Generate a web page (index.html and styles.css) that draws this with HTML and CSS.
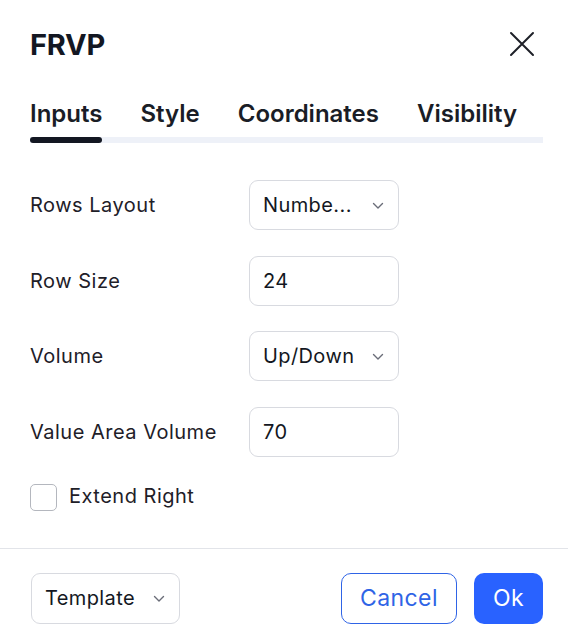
FILE: index.html
```html
<!DOCTYPE html>
<html>
<head>
<meta charset="utf-8">
<link rel="stylesheet" href="styles.css">
</head>
<body>
<div class="dialog">
  <div class="header">
    <div class="title">FRVP</div>
    <svg class="close" width="26" height="26" viewBox="0 0 26 26"><path d="M2 2 L24 24 M24 2 L2 24" stroke="#1e2028" stroke-width="2" stroke-linecap="round" fill="none"/></svg>
  </div>
  <div class="tabs">
    <div class="tab active">Inputs</div>
    <div class="tab">Style</div>
    <div class="tab">Coordinates</div>
    <div class="tab">Visibility</div>
  </div>
  <div class="form">
    <div class="label">Rows Layout</div>
    <div class="field select"><span>Numbe...</span><svg class="chev" width="12" height="8" viewBox="0 0 12 8"><path d="M1.5 1.5 L6 6 L10.5 1.5" stroke="#6a6d78" stroke-width="1.4" fill="none" stroke-linecap="round" stroke-linejoin="round"/></svg></div>
    <div class="label">Row Size</div>
    <div class="field"><span>24</span></div>
    <div class="label">Volume</div>
    <div class="field select"><span>Up/Down</span><svg class="chev" width="12" height="8" viewBox="0 0 12 8"><path d="M1.5 1.5 L6 6 L10.5 1.5" stroke="#6a6d78" stroke-width="1.4" fill="none" stroke-linecap="round" stroke-linejoin="round"/></svg></div>
    <div class="label">Value Area Volume</div>
    <div class="field"><span>70</span></div>
  </div>
  <div class="check-row">
    <div class="checkbox"></div>
    <div class="check-label">Extend Right</div>
  </div>
</div>
<div class="footer">
  <div class="field select template"><span>Template</span><svg class="chev" width="12" height="8" viewBox="0 0 12 8"><path d="M1.5 1.5 L6 6 L10.5 1.5" stroke="#6a6d78" stroke-width="1.4" fill="none" stroke-linecap="round" stroke-linejoin="round"/></svg></div>
  <div class="buttons">
    <div class="btn cancel">Cancel</div>
    <div class="btn ok">Ok</div>
  </div>
</div>
</body>
</html>
```
FILE: styles.css
```css
* { box-sizing: border-box; }
html, body { margin: 0; padding: 0; background: #fff; }
body {
  font-family: Inter, "Noto Sans", "Liberation Sans", sans-serif;
  color: #131722;
  width: 568px;
  height: 644px;
  overflow: hidden;
}
.dialog { padding: 0 25px 0 30px; }
.header {
  height: 88px;
  display: flex;
  align-items: center;
  justify-content: space-between;
}
.title {
  font-size: 29px;
  font-weight: 700;
  letter-spacing: -0.2px;
}
.close { margin-right: 8px; }
.tabs {
  display: flex;
  gap: 38px;
  height: 55px;
  align-items: flex-start;
  padding-top: 12px;
  background: linear-gradient(#eef1f8, #eef1f8) no-repeat left bottom / 100% 6px;
}
.tab {
  font-size: 24px;
  font-weight: 600;
  letter-spacing: 0;
  height: 43px;
  line-height: 28px;
  position: relative;
  color: #1a1d26;
}
.tab.active::after {
  content: "";
  position: absolute;
  left: 0;
  right: 0;
  bottom: 0;
  height: 6px;
  border-radius: 3px;
  background: #131722;
}
.form {
  margin-top: 37px;
  display: grid;
  grid-template-columns: 219px 150px;
  row-gap: 25.5px;
  align-items: center;
}
.label {
  font-size: 20px;
  letter-spacing: 0.5px;
  color: #1e2028;
}
.field {
  height: 50px;
  border: 1.5px solid #d8dae0;
  border-radius: 9px;
  display: flex;
  align-items: center;
  justify-content: space-between;
  padding: 0 14px 0 13px;
  font-size: 20px;
  letter-spacing: 0.4px;
  color: #131722;
}
.chev { margin-top: 1px; }
.check-row {
  margin-top: 27px;
  display: flex;
  align-items: center;
  gap: 12px;
  height: 27px;
}
.checkbox {
  width: 27px;
  height: 27px;
  border: 1.5px solid #b4b7be;
  border-radius: 5px;
}
.check-label { font-size: 20px; letter-spacing: 0.5px; color: #1e2028; margin-top: -3px; }
.footer {
  margin-top: 37px;
  border-top: 1.5px solid #e2e4e9;
  padding: 24px 25px 0 31px;
  display: flex;
  justify-content: space-between;
  align-items: center;
}
.template { width: 149px; height: 51px; }
.buttons { display: flex; gap: 17px; }
.btn {
  height: 51px;
  border-radius: 10px;
  display: flex;
  align-items: center;
  justify-content: center;
  font-size: 23px;
  letter-spacing: 0.4px;
}
.cancel {
  width: 116px;
  border: 1.5px solid #2f64e6;
  color: #2f64e6;
}
.ok {
  width: 69px;
  background: #2962ff;
  color: #fff;
}
```
